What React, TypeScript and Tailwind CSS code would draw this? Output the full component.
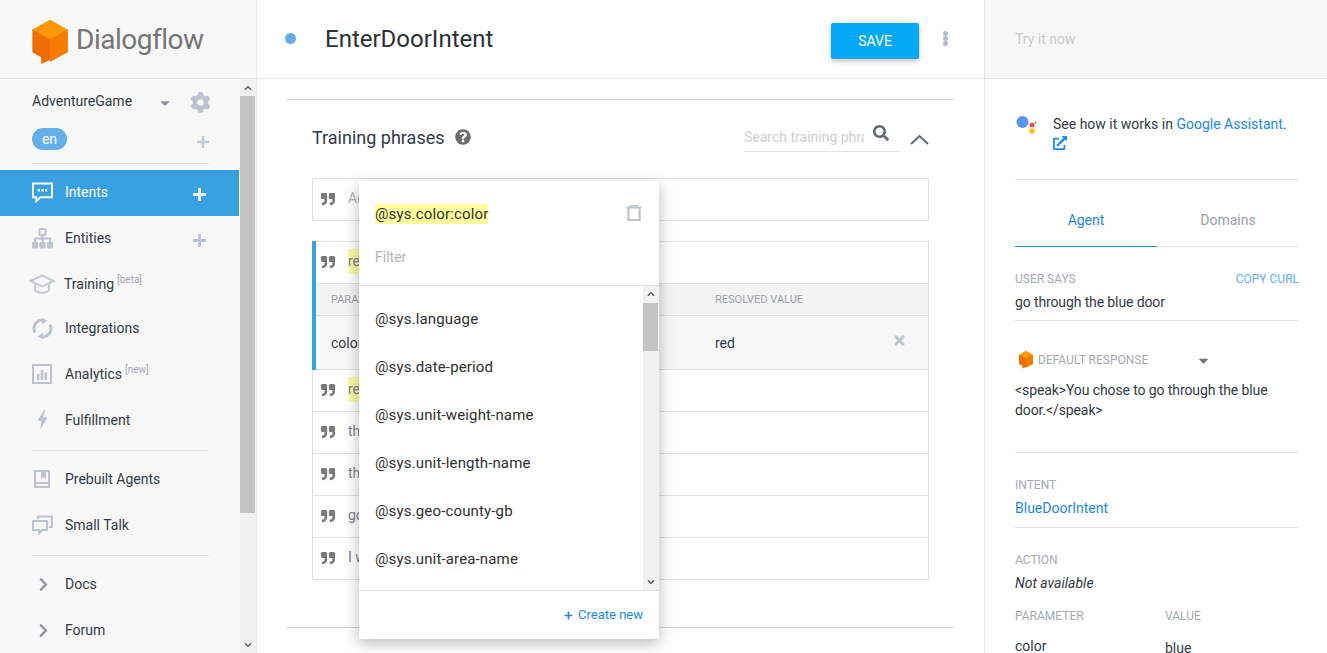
import React from 'react';
import {
  FaQuoteRight,
  FaQuestionCircle,
  FaCog,
  FaSearch,
  FaTimes,
  FaChevronRight,
  FaChevronUp,
  FaChevronDown,
  FaPlus,
  FaExternalLinkAlt,
  FaCaretDown,
} from 'react-icons/fa';

// Dialogflow cube logo
const Cube = ({ className }: { className: string }) => (
  <svg viewBox="0 0 36 46" className={className}>
    <path d="M18 0 L36 10 L36 33 L9 45 L9 38 L0 33 L0 10 Z" fill="#ef6c00" />
    <path d="M18 0 L36 10 L18 20 L0 10 Z" fill="#ff9800" />
    <path d="M18 20 L36 10 L36 33 L18 43 Z" fill="#f57c00" />
  </svg>
);

const IntentsIcon = () => (
  <svg viewBox="0 0 22 22" className="h-[21px] w-[21px]">
    <path d="M1 1.5 H21 V16 H9 L4.5 20 V16 H1 Z" fill="none" stroke="#fff" strokeWidth="2" />
    <rect x="6" y="7.5" width="2.4" height="2.4" fill="#fff" />
    <rect x="9.8" y="7.5" width="2.4" height="2.4" fill="#fff" />
    <rect x="13.6" y="7.5" width="2.4" height="2.4" fill="#fff" />
  </svg>
);

const EntitiesIcon = () => (
  <svg viewBox="0 0 21 21" className="h-[21px] w-[21px]">
    <rect x="7.5" y="1" width="6" height="6" rx="0.5" fill="none" stroke="#bcc3cf" strokeWidth="2" />
    <path d="M10.5 7 V14 M3 14 V10.5 H18 V14" fill="none" stroke="#bcc3cf" strokeWidth="2" />
    <rect x="0" y="14" width="6" height="6.5" rx="1" fill="#bcc3cf" />
    <rect x="7.5" y="14" width="6" height="6.5" rx="1" fill="#bcc3cf" />
    <rect x="15" y="14" width="6" height="6.5" rx="1" fill="#bcc3cf" />
  </svg>
);

const TrainingIcon = () => (
  <svg viewBox="0 0 26 21" className="-ml-[3px] h-[21px] w-[26px]">
    <path d="M13 1.5 L24.5 7 L13 12.5 L1.5 7 Z" fill="none" stroke="#c4cad4" strokeWidth="2" />
    <path d="M6 10.5 V16 C8 19.5 18 19.5 20 16 V10.5" fill="none" stroke="#c4cad4" strokeWidth="2" />
  </svg>
);

const IntegrationsIcon = () => (
  <svg viewBox="0 0 21 21" className="h-[21px] w-[21px]">
    <path d="M3 14.5 A8.5 8.5 0 0 1 11.5 2.1" fill="none" stroke="#bcc3cf" strokeWidth="3" />
    <path d="M18 6.5 A8.5 8.5 0 0 1 9.5 18.9" fill="none" stroke="#bcc3cf" strokeWidth="3" />
    <path d="M10 0 L15.5 2.5 L10 6.5 Z" fill="#bcc3cf" />
    <path d="M11 21 L5.5 18.5 L11 14.5 Z" fill="#bcc3cf" />
  </svg>
);

const AnalyticsIcon = () => (
  <svg viewBox="0 0 20 20" className="h-5 w-5">
    <rect x="1" y="1" width="18" height="18" fill="none" stroke="#bcc3cf" strokeWidth="2" />
    <rect x="5" y="10" width="2.4" height="6" fill="#bcc3cf" />
    <rect x="8.8" y="6" width="2.4" height="10" fill="#bcc3cf" />
    <rect x="12.6" y="8.5" width="2.4" height="7.5" fill="#bcc3cf" />
  </svg>
);

const BoltIcon = () => (
  <svg viewBox="0 0 11 20" className="ml-[5px] h-5 w-[11px]">
    <path d="M7 0 L0.5 11 H4.5 L3 20 L10.5 7.5 H6 L8 0 Z" fill="#bcc3cf" />
  </svg>
);

const BookIcon = () => (
  <svg viewBox="0 0 20 20" className="h-5 w-5">
    <path d="M2 1 H18 V19 H2 Z" fill="#bcc3cf" />
    <path d="M4 3 H16 V13 H4 Z" fill="#f8f8f8" />
    <path d="M4 15 H16 V17 H4 Z" fill="#f8f8f8" />
    <path d="M9 3 H14 V10 L11.5 8 L9 10 Z" fill="#bcc3cf" />
  </svg>
);

const SmallTalkIcon = () => (
  <svg viewBox="0 0 21 20" className="h-5 w-[21px]">
    <path d="M6 4 V1.5 H20 V12 H17" fill="none" stroke="#bcc3cf" strokeWidth="2.2" />
    <path d="M1 6 H15 V15 H10 L7 18.5 V15 H1 Z" fill="none" stroke="#bcc3cf" strokeWidth="2.2" />
  </svg>
);

const TrashIcon = () => (
  <svg viewBox="0 0 16 16" className="h-4 w-4">
    <path d="M0.5 2.5 H15.5" stroke="#bcc3cf" strokeWidth="2" />
    <path d="M5 2.5 V0.8 H11 V2.5" fill="none" stroke="#bcc3cf" strokeWidth="1.6" />
    <path d="M2.4 3 V15 H13.6 V3" fill="none" stroke="#bcc3cf" strokeWidth="2.2" />
  </svg>
);

const NavItem = ({
  icon,
  label,
  sup,
  plus,
  active,
  short,
}: {
  icon: React.ReactNode;
  label: string;
  sup?: string;
  plus?: boolean;
  active?: boolean;
  short?: boolean;
}) => (
  <div
    className={`flex items-center pl-8 pr-[32px] ${short ? 'h-[44px]' : 'h-[46px] pb-[2px]'} ${
      active ? 'bg-[#39a0e2] text-white' : 'text-[#333a45]'
    }`}
  >
    <div className="flex w-[33px] shrink-0 items-center justify-start">{icon}</div>
    <span className={`text-[14px] ${short ? '-ml-px' : ''}`}>{label}</span>
    {sup && <span className="relative -top-[5px] ml-[3px] text-[10px] text-[#a4a9b3]">[{sup}]</span>}
    {plus && (
      <FaPlus className={`ml-auto mt-[4px] text-[15px] ${active ? 'text-white' : 'text-[#bcc3cf]'}`} />
    )}
  </div>
);

const Scrollbar = ({ thumb, rest }: { thumb: number; rest: number }) => (
  <div className="flex h-full w-[16px] shrink-0 flex-col items-start bg-[#f1f1f1]">
    <div className="flex h-[17px] w-[15px] items-center justify-center">
      <FaChevronUp className="text-[8px] text-[#505050]" />
    </div>
    <div className="w-[15px] bg-[#c4c4c4]" style={{ height: thumb }} />
    <div style={{ height: rest }} />
    <div className="flex h-[17px] w-[15px] items-center justify-center">
      <FaChevronDown className="text-[8px] text-[#505050]" />
    </div>
  </div>
);

const Sidebar = () => (
  <div className="flex h-full w-[257px] shrink-0 flex-col border-r border-[#e6e6e6] bg-[#f8f8f8]">
    <div className="flex h-[79px] shrink-0 items-center border-b border-[#e6e6e6] pl-8">
      <Cube className="mt-[6px] h-[45px] w-[36px]" />
      <span className="ml-[8px] mt-[2px] text-[28px] tracking-[-0.5px] text-[#757575]">Dialogflow</span>
    </div>
    <div className="flex min-h-0 flex-1">
      <div className="w-[239px] overflow-hidden">
        <div className="flex h-[44px] items-center pl-8 pr-[28px] pt-[1px]">
          <span className="text-[14px] text-[#333a45]">AdventureGame</span>
          <FaCaretDown className="ml-[26px] mt-[3px] text-[14px] text-[#8c93a3]" />
          <FaCog className="ml-auto mt-[2px] text-[21px] text-[#bcc3cf]" />
        </div>
        <div className="flex h-[40px] items-start pl-8 pr-[29px] pt-[5px]">
          <span className="flex h-[22px] w-[35px] items-center justify-center rounded-full bg-[#64aeea] text-[14px] text-white">en</span>
          <FaPlus className="ml-auto mt-[7px] text-[14px] text-[#c4cad4]" />
        </div>
        <div className="mx-8 mb-[6px] h-px w-[177px] bg-[#e4e4e4]" />
        <NavItem active icon={<IntentsIcon />} label="Intents" plus />
        <NavItem icon={<EntitiesIcon />} label="Entities" plus />
        <NavItem short icon={<TrainingIcon />} label="Training" sup="beta" />
        <NavItem icon={<IntegrationsIcon />} label="Integrations" />
        <NavItem icon={<AnalyticsIcon />} label="Analytics" sup="new" />
        <NavItem icon={<BoltIcon />} label="Fulfillment" />
        <div className="mx-8 my-[6px] h-px w-[177px] bg-[#e4e4e4]" />
        <NavItem icon={<BookIcon />} label="Prebuilt Agents" />
        <NavItem icon={<SmallTalkIcon />} label="Small Talk" />
        <div className="mx-8 my-[6px] h-px w-[177px] bg-[#e4e4e4]" />
        <NavItem icon={<FaChevronRight className="ml-[4px] text-[15px] text-[#8f96a3]" />} label="Docs" />
        <NavItem icon={<FaChevronRight className="ml-[4px] text-[15px] text-[#8f96a3]" />} label="Forum" />
      </div>
      <div className="w-px bg-[#f8f8f8]" />
      <Scrollbar thumb={417} rest={123} />
    </div>
  </div>
);

const Quote = () => <FaQuoteRight className="mr-[13px] shrink-0 text-[14px] text-[#7a7a7a]" />;

const PhraseRow = ({ text, hl, top }: { text: string; hl?: boolean; top?: boolean }) => (
  <div className={`flex items-center pb-[2px] pl-2 ${top ? 'h-[41px]' : 'h-[42px] border-t border-[#e1e1e1]'}`}>
    <Quote />
    <span className={`text-[14px] text-[#78808c] ${hl ? 'bg-[#fbfba8] py-[2px]' : ''}`}>{text}</span>
  </div>
);

const Popup = () => (
  <div className="absolute left-[102px] top-[102px] w-[300px] bg-white shadow-[0_4px_14px_rgba(0,0,0,0.28)]">
    <div className="flex h-[105px] flex-col border-b border-[#e0e0e0] pl-4 pr-4">
      <div className="flex h-[66px] items-center justify-between">
        <span className="bg-[#ffff9e] text-[15px] leading-[20px] tracking-[0.15px] text-[#2f2f2f]">@sys.color:color</span>
        <div className="mb-[3px] mr-[1px]">
          <TrashIcon />
        </div>
      </div>
      <span className="text-[14px] text-[#b4b4b4]">Filter</span>
    </div>
    <div className="flex h-[305px] border-b border-[#e0e0e0]">
      <div className="flex flex-1 flex-col overflow-hidden pl-4 pt-[9px]">
        {['@sys.language', '@sys.date-period', '@sys.unit-weight-name', '@sys.unit-length-name', '@sys.geo-county-gb', '@sys.unit-area-name'].map((item) => (
          <div key={item} className="flex h-[48px] shrink-0 items-center text-[15px] tracking-[0.15px] text-[#2f2f2f]">
            {item}
          </div>
        ))}
      </div>
      <Scrollbar thumb={48} rest={223} />
    </div>
    <div className="flex h-[48px] items-center justify-end pr-4 text-[13px] text-[#1e88e5]">
      <FaPlus className="mr-[5px] text-[9px]" />
      Create new
    </div>
  </div>
);

const Center = () => (
  <div className="flex h-full min-w-0 flex-1 flex-col border-r border-[#e6e6e6] bg-white">
    <div className="flex h-[79px] shrink-0 items-center border-b border-[#e6e6e6] pl-[28px]">
      <span className="mb-[2px] h-[11px] w-[11px] rounded-full bg-[#64aeea]" />
      <span className="ml-[29px] mb-[1px] text-[24px] text-[#2d3038]">EnterDoorIntent</span>
      <button className="ml-auto mt-[4px] flex h-[36px] w-[88px] items-center justify-center rounded-[2px] bg-[#03a9f4] text-[14px] text-white shadow-[0_2px_5px_rgba(0,0,0,0.26)]">
        SAVE
      </button>
      <div className="ml-[24px] mr-[36px] flex flex-col pb-[2px]">
        <span className="h-[5px] w-[5px] rounded-full bg-[#b4bac6]" />
        <span className="h-[5px] w-[5px] rounded-full bg-[#b4bac6]" />
        <span className="h-[5px] w-[5px] rounded-full bg-[#b4bac6]" />
      </div>
    </div>
    <div className="relative min-h-0 flex-1 overflow-hidden px-[30px] pt-[20px]">
      <div className="h-[529px] border-y border-[#cfcfcf] px-[25px]">
        <div className="flex h-[78px] items-center pb-[4px]">
          <span className="text-[18px] text-[#333a45]">Training phrases</span>
          <FaQuestionCircle className="ml-[10px] text-[16px] text-[#6e6e6e]" />
          <div className="ml-auto flex h-[29px] w-[156px] items-start border-b border-[#e4e4e4]">
            <span className="w-[120px] overflow-hidden whitespace-nowrap pt-[4px] text-[14px] text-[#cfcfcf]">Search training phrases</span>
            <FaSearch className="ml-[9px] mt-[2px] text-[16px] text-[#606870]" />
          </div>
          <svg viewBox="0 0 19 11" className="ml-[10px] mt-[4px] h-[11px] w-[19px]">
            <path d="M1 10 L9.5 2 L18 10" fill="none" stroke="#606870" strokeWidth="2" />
          </svg>
        </div>
        <div className="flex h-[43px] items-center border border-[#e1e1e1] pb-[2px] pl-2">
          <Quote />
          <span className="text-[14px] text-[#b4b4b4]">Add user expression</span>
        </div>
        <div className="relative mt-[20px] border border-[#e1e1e1]">
          <div className="absolute -left-px -top-px h-[129px] w-[4px] bg-[#39a0e2]" />
          <PhraseRow text="red door" hl top />
          <div className="flex h-[32px] items-center border-t border-[#e1e1e1] bg-[#f3f5f5] pl-[18px] pt-[2px] text-[11px] text-[#9a9ea6]">
            <span className="w-[384px]">PARAMETER NAME</span>
            <span>RESOLVED VALUE</span>
          </div>
          <div className="flex h-[54px] items-center border-t border-[#e1e1e1] bg-[#f7f7f7] pl-[18px] pt-[2px] text-[14px] text-[#333a45]">
            <span className="w-[384px]">color</span>
            <span>red</span>
            <FaTimes className="ml-auto mb-[6px] mr-[21px] text-[15px] text-[#bcc3cf]" />
          </div>
          <PhraseRow text="red" hl />
          <PhraseRow text="the red door" />
          <PhraseRow text="the red one" />
          <PhraseRow text="go through the red door" />
          <PhraseRow text="I want the red door" />
        </div>
      </div>
      <Popup />
    </div>
  </div>
);

const Label = ({ children, className = 'text-[#a4a9b3]' }: { children: React.ReactNode; className?: string }) => (
  <div className={`text-[12px] leading-[14px] ${className}`}>{children}</div>
);

const RightPanel = () => (
  <div className="flex h-full w-[342px] shrink-0 flex-col bg-white">
    <div className="flex h-[79px] shrink-0 items-center border-b border-[#e6e6e6] bg-[#f7f7f7] pl-[30px] text-[14px] text-[#c8c8c8]">
      Try it now
    </div>
    <div className="min-h-0 flex-1 overflow-hidden pl-[30px] pr-[28px] text-[14px] text-[#333a45]">
      <div className="flex h-[101px] border-b border-[#e1e1e1] pt-[35px]">
        <svg viewBox="0 0 22 20" className="mr-[16px] mt-[1px] h-[20px] w-[22px] shrink-0">
          <circle cx="7.5" cy="7" r="6" fill="#5a95ea" />
          <circle cx="17" cy="10" r="2.5" fill="#e5534b" />
          <circle cx="20.5" cy="7.5" r="1" fill="#4caf50" />
          <circle cx="17" cy="16" r="2.8" fill="#fbc02d" />
        </svg>
        <div className="leading-[20px]">
          See how it works in <span className="text-[#1e88e5]">Google Assistant</span>.
          <div className="mt-[2px] text-[#1e88e5]">
            <FaExternalLinkAlt className="text-[14px]" />
          </div>
        </div>
      </div>
      <div className="flex h-[67px] border-b border-[#e1e1e1]">
        <div className="-mb-px flex w-[142px] items-center justify-center border-b border-[#1e88e5] pt-[14px] text-[#1e88e5]">Agent</div>
        <div className="flex flex-1 items-center justify-center pt-[14px] text-[#9aa0aa]">Domains</div>
      </div>
      <div className="flex h-[74px] flex-col border-b border-[#e1e1e1] pt-[25px]">
        <div className="flex justify-between">
          <Label>USER SAYS</Label>
          <Label className="text-[#64b0ec]">COPY CURL</Label>
        </div>
        <div className="mt-[7px] leading-[18px] tracking-[-0.12px]">go through the blue door</div>
      </div>
      <div className="h-[132px] border-b border-[#e1e1e1] pt-[30px]">
        <div className="flex items-center">
          <Cube className="ml-[4px] h-[18px] w-[14px]" />
          <Label className="ml-[5px] text-[#a4a9b3]">DEFAULT RESPONSE</Label>
          <FaCaretDown className="ml-[48px] text-[15px] text-[#757575]" />
        </div>
        <div className="mt-[11px] w-[270px] leading-[20px] tracking-[-0.1px]">&lt;speak&gt;You chose to go through the blue door.&lt;/speak&gt;</div>
      </div>
      <div className="h-[75px] border-b border-[#e1e1e1] pt-[25px]">
        <Label>INTENT</Label>
        <div className="mt-[7px] leading-[18px] text-[#1e88e5]">BlueDoorIntent</div>
      </div>
      <div className="pt-[25px]">
        <Label>ACTION</Label>
        <div className="mt-[7px] italic leading-[18px]">Not available</div>
      </div>
      <div className="mt-[17px] flex">
        <div className="w-[150px]">
          <Label>PARAMETER</Label>
          <div className="mt-[13px]">color</div>
        </div>
        <div>
          <Label>VALUE</Label>
          <div className="mt-[15px]">blue</div>
        </div>
      </div>
    </div>
  </div>
);

export default function App() {
  return (
    <div className="flex h-[653px] w-[1327px] overflow-hidden font-['Roboto',sans-serif]">
      <Sidebar />
      <Center />
      <RightPanel />
    </div>
  );
}
